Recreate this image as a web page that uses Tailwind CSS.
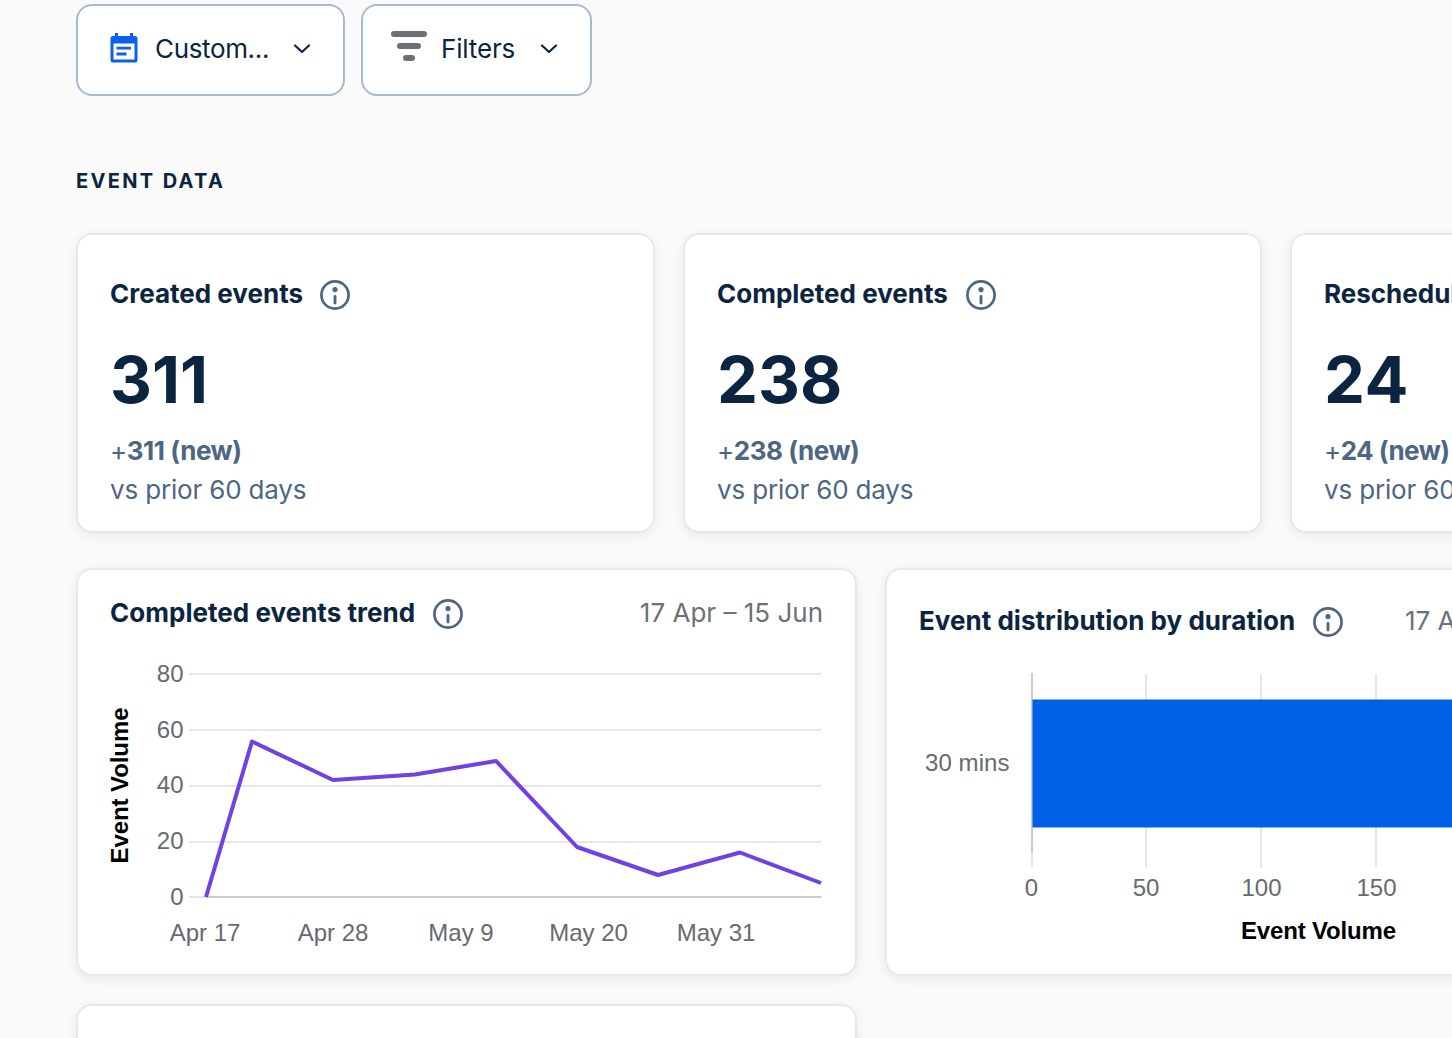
<!DOCTYPE html>
<html lang="en">
<head>
<meta charset="utf-8">
<title>Analytics</title>
<script src="https://cdn.jsdelivr.net/npm/@tailwindcss/browser@4"></script>
</head>
<body class="h-[1038px] w-[1452px] overflow-hidden bg-[#fafafa] font-['Inter',sans-serif] text-[#0b2540]">
<svg class="hidden">
  <symbol id="info" viewBox="0 0 30 30">
    <circle cx="15" cy="15" r="13.6" fill="none" stroke="#4d6683" stroke-width="2.7"/>
    <circle cx="15" cy="9.6" r="2.6" fill="#4d6683"/>
    <path d="M15 16.500v6.500" stroke="#4d6683" stroke-width="2.9" stroke-linecap="round"/>
  </symbol>
</svg>
<main class="pt-1 pl-[76px]">
  <div class="flex gap-4">
    <button class="flex h-[92px] w-[269px] items-center rounded-2xl border-2 border-[#a6bbd1] bg-white pl-[31.500px]">
      <svg class="-mt-1 h-[30px] w-[28px] shrink-0" viewBox="0 0 28 30">
        <path d="M5 0h3v3h12V0h3v3H25a2.500 2.500 0 0 1 2.500 2.500V27a2.500 2.500 0 0 1-2.500 2.500H3A2.500 2.500 0 0 1 .5 27V5.500A2.500 2.500 0 0 1 3 3h2z" fill="#0a61f0"/>
        <path d="M3.500 10.500h21v16h-21z" fill="#fff"/>
        <path d="M6.500 15.200h14.500M6.500 21h10" stroke="#0a61f0" stroke-width="2.800"/>
      </svg>
      <span class="-mt-1 ml-[17.500px] w-[116px] whitespace-nowrap text-left text-[26px] tracking-[-0.35px]">Custom...</span>
      <svg class="-mt-0.5 ml-[22px] h-[10px] w-[18px]" viewBox="0 0 18 10"><path d="M2 1.500l7 6.500 7-6.500" fill="none" stroke="#0b2540" stroke-width="2.200" stroke-linecap="round" stroke-linejoin="round"/></svg>
    </button>
    <button class="flex h-[92px] w-[231px] items-center rounded-2xl border-2 border-[#a6bbd1] bg-white pl-7">
      <svg class="-mt-2 h-[30px] w-[36px] shrink-0" viewBox="0 0 36 30"><path d="M3 3h30M9 15h18M15 27h6" stroke="#6b7074" stroke-width="6" stroke-linecap="round"/></svg>
      <span class="-mt-1 ml-[14px] w-[77px] whitespace-nowrap text-left text-[26px] tracking-[-0.15px]">Filters</span>
      <svg class="-mt-0.5 ml-[22px] h-[10px] w-[18px]" viewBox="0 0 18 10"><path d="M2 1.500l7 6.500 7-6.500" fill="none" stroke="#0b2540" stroke-width="2.200" stroke-linecap="round" stroke-linejoin="round"/></svg>
    </button>
  </div>

  <h2 class="mt-[69px] h-8 text-[20px] leading-8 font-bold tracking-[2.35px]">EVENT DATA</h2>

  <div class="mt-[36px] flex gap-7">
    <section class="h-[300px] w-[579px] shrink-0 rounded-2xl border-2 border-[#e8e8e8] bg-white px-8 pt-10 whitespace-nowrap shadow-[0_3px_12px_rgba(0,0,0,0.07)]">
      <div class="flex h-10 items-center"><h3 class="w-[210px] pb-[3px] text-[26px] font-bold">Created events</h3><svg class="h-[30px] w-[30px]"><use href="#info"/></svg></div>
      <p class="mt-[25px] h-20 text-[65px] leading-[80px] font-bold">311</p>
      <p class="mt-[11px] h-[39px] text-[26px] leading-[39px] tracking-[-0.45px] text-[#4d6683]">+<b>311 (new)</b></p>
      <p class="h-[39px] text-[26px] leading-[39px] tracking-[-0.17px] text-[#4d6683]">vs prior 60 days</p>
    </section>
    <section class="h-[300px] w-[579px] shrink-0 rounded-2xl border-2 border-[#e8e8e8] bg-white px-8 pt-10 whitespace-nowrap shadow-[0_3px_12px_rgba(0,0,0,0.07)]">
      <div class="flex h-10 items-center"><h3 class="w-[249px] pb-[3px] text-[26px] font-bold">Completed events</h3><svg class="h-[30px] w-[30px]"><use href="#info"/></svg></div>
      <p class="mt-[25px] h-20 text-[65px] leading-[80px] font-bold">238</p>
      <p class="mt-[11px] h-[39px] text-[26px] leading-[39px] tracking-[-0.45px] text-[#4d6683]">+<b>238 (new)</b></p>
      <p class="h-[39px] text-[26px] leading-[39px] tracking-[-0.17px] text-[#4d6683]">vs prior 60 days</p>
    </section>
    <section class="h-[300px] w-[579px] shrink-0 rounded-2xl border-2 border-[#e8e8e8] bg-white px-8 pt-10 whitespace-nowrap shadow-[0_3px_12px_rgba(0,0,0,0.07)]">
      <div class="flex h-10 items-center"><h3 class="pb-[3px] text-[26px] font-bold">Rescheduled events</h3></div>
      <p class="mt-[25px] h-20 text-[65px] leading-[80px] font-bold tracking-[0.5px]">24</p>
      <p class="mt-[11px] h-[39px] text-[26px] leading-[39px] tracking-[-0.55px] text-[#4d6683]">+<b>24 (new)</b></p>
      <p class="h-[39px] text-[26px] leading-[39px] tracking-[-0.17px] text-[#4d6683]">vs prior 60 days</p>
    </section>
  </div>

  <div class="mt-[35px] flex gap-7">
    <section class="h-[408px] w-[781px] shrink-0 rounded-2xl border-2 border-[#e8e8e8] bg-white px-8 pt-6 whitespace-nowrap shadow-[0_3px_12px_rgba(0,0,0,0.07)]">
      <div class="flex h-10 items-center"><h3 class="w-[323px] pb-[3px] text-[26px] font-bold tracking-[0.03px]">Completed events trend</h3><svg class="h-[30px] w-[30px]"><use href="#info"/></svg><span class="ml-auto pb-[3px] text-[26px] text-[#6b7178]">17 Apr – 15 Jun</span></div>
      <svg class="h-[300px] w-[713px] font-['Liberation_Sans',Arial,sans-serif] text-[24px]" viewBox="110 634 713 300" overflow="visible">
        <path d="M189 674h632M189 730h632M189 786h632M189 842h632M189 897h17" stroke="#e6e6e6" stroke-width="2"/>
        <path d="M206 897h615.500" stroke="#cccccc" stroke-width="2"/>
        <path d="M206 897L252 741.500L333 780L415 774.500L496 761L577 847L658 875L740 852.500L821 883" fill="none" stroke="#7341e1" stroke-width="4" stroke-linejoin="round"/>
        <g fill="#666a6f" text-anchor="end"><text x="183.500" y="682">80</text><text x="183.500" y="738">60</text><text x="183.500" y="793">40</text><text x="183.500" y="849">20</text><text x="183.500" y="905">0</text></g>
        <g fill="#666a6f" text-anchor="middle"><text x="205" y="941">Apr 17</text><text x="333" y="941">Apr 28</text><text x="461" y="941">May 9</text><text x="588.500" y="941">May 20</text><text x="716" y="941">May 31</text></g>
        <text transform="translate(128 785.500) rotate(-90)" text-anchor="middle" class="font-bold" textLength="156">Event Volume</text>
      </svg>
    </section>
    <section class="h-[408px] w-[781px] shrink-0 rounded-2xl border-2 border-[#e8e8e8] bg-white px-8 pt-8 whitespace-nowrap shadow-[0_3px_12px_rgba(0,0,0,0.07)]">
      <div class="flex h-10 items-center"><h3 class="w-[394px] pb-[3px] text-[26px] font-bold tracking-[0.03px]">Event distribution by duration</h3><svg class="h-[30px] w-[30px]"><use href="#info"/></svg><span class="ml-[62px] pb-[3px] text-[26px] text-[#6b7178]">17 Apr – 15 Jun</span></div>
      <svg class="h-[300px] w-[713px] font-['Liberation_Sans',Arial,sans-serif] text-[24px]" viewBox="919 642 713 300" overflow="visible">
        <path d="M1146 674v194M1261 674v194M1376 674v194M1032 853v15" stroke="#e6e6e6" stroke-width="2"/>
        <path d="M1032 673v180" stroke="#cccccc" stroke-width="2"/>
        <path d="M1032.500 699.500h500v128h-500z" fill="#0060e6"/>
        <text x="1009.500" y="771" text-anchor="end" fill="#666a6f" textLength="84.500">30 mins</text>
        <g fill="#666a6f" text-anchor="middle"><text x="1031.500" y="896">0</text><text x="1146" y="896">50</text><text x="1261.500" y="896">100</text><text x="1376.500" y="896">150</text></g>
        <text x="1318.500" y="939" text-anchor="middle" class="font-bold" textLength="155">Event Volume</text>
      </svg>
    </section>
  </div>

  <div class="mt-7">
    <section class="h-[408px] w-[781px] rounded-2xl border-2 border-[#e8e8e8] bg-white shadow-[0_3px_12px_rgba(0,0,0,0.07)]"></section>
  </div>
</main>
</body>
</html>
